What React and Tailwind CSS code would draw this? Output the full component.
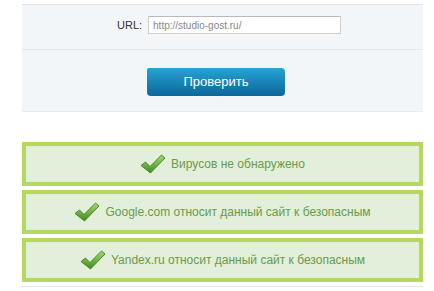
import React from "react";

function Check() {
  return (
    <svg width="26" height="20" viewBox="0 0 26 20" className="shrink-0">
      <defs>
        <linearGradient id="cg" x1="0" y1="0" x2="0" y2="1">
          <stop offset="0" stopColor="#a6d877" />
          <stop offset="0.5" stopColor="#72b443" />
          <stop offset="1" stopColor="#3f8a1f" />
        </linearGradient>
      </defs>
      <path
        d="M1 11.5 L5.5 8 L10 12.5 L21.5 1 L25 4 L10.5 19 Z"
        fill="url(#cg)"
        stroke="#4a8b28"
        strokeWidth="1"
        strokeLinejoin="round"
      />
    </svg>
  );
}

function Box({ children }) {
  return (
    <div className="h-[44px] border-[4px] border-[#b5d95f] bg-[#e2efda] flex items-center justify-center gap-[5px]">
      <Check />
      <span className="text-[12px] text-[#6a9a4a]">{children}</span>
    </div>
  );
}

export default function App() {
  return (
    <div
      className="w-[434px] h-[291px] bg-white overflow-hidden"
      style={{ fontFamily: '"Liberation Sans", Arial, sans-serif' }}
    >
      <div className="mt-[4px] mx-[22px] w-[401px] bg-[#f3f6f8] border-t border-[#dfe5e9] border-b border-b-[#e8edf0]">
        <div className="h-[45px] border-b border-[#e3e8eb] flex items-start pt-[11px] pl-[95px]">
          <span className="text-[11px] text-[#333] leading-[18px] mr-[6px]">URL:</span>
          <div className="w-[193px] h-[18px] bg-white border border-[#cfcfcf] border-t-[#b9b9b9] flex items-center pl-[4px]">
            <span className="text-[10px] text-[#888]">http://studio-gost.ru/</span>
          </div>
        </div>
        <div className="h-[61px] pt-[18px] pl-[125px]">
          <div className="w-[138px] h-[28px] rounded-[4px] rounded-tl-[2px] bg-gradient-to-b from-[#27a3d6] to-[#0b6799] flex items-center justify-center">
            <span className="text-[13px] text-white">Проверить</span>
          </div>
        </div>
      </div>
      <div className="mt-[30px] mx-[22px] w-[401px] flex flex-col gap-[4px]">
        <Box>Вирусов не обнаружено</Box>
        <Box>Google.com относит данный сайт к безопасным</Box>
        <Box>Yandex.ru относит данный сайт к безопасным</Box>
      </div>
      <div className="mt-[4px] mx-[22px] w-[401px] h-[1px] bg-[#dde6ee]" />
    </div>
  );
}
